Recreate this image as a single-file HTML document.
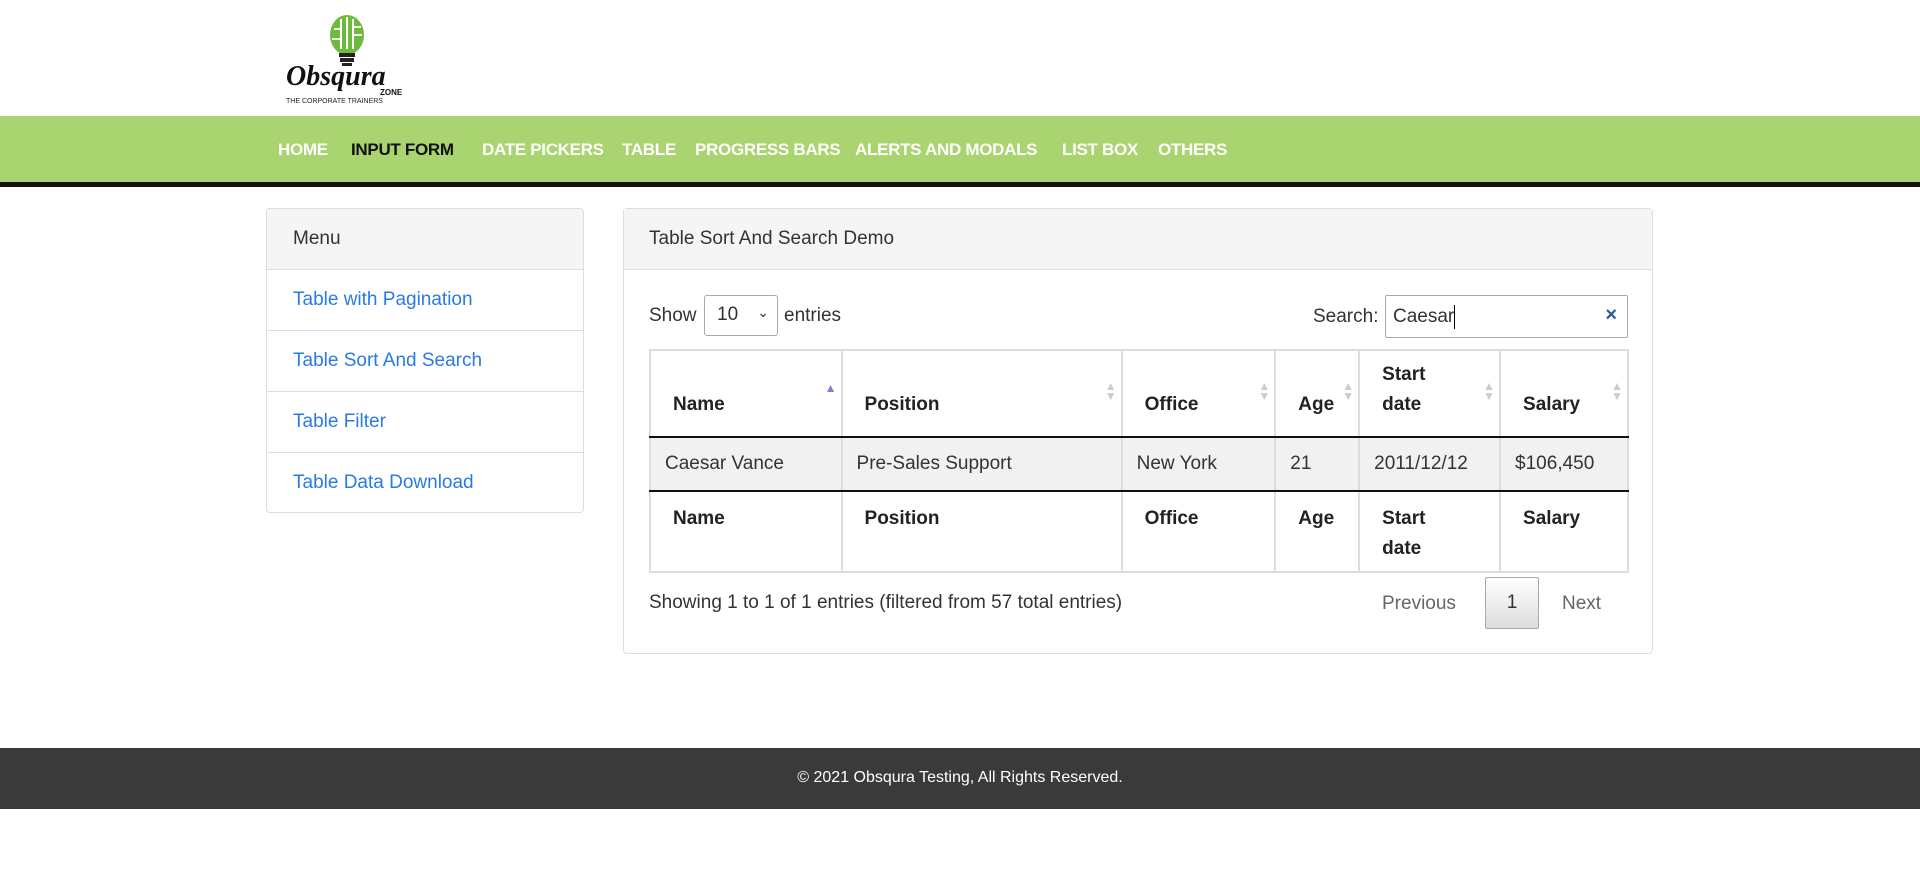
<!DOCTYPE html>
<html><head><meta charset="utf-8"><style>
*{box-sizing:border-box;margin:0;padding:0}
body{width:1920px;height:875px;background:#fff;font-family:"Liberation Sans",Arial,sans-serif;color:#333;position:relative;overflow:hidden;font-size:19px}
.abs{position:absolute}
.nav{left:0;top:116px;width:1920px;height:71px;background:#a9d46f;border-bottom:5px solid #111}
.nav span{position:absolute;top:24px;font-weight:bold;font-size:17px;color:#fff;letter-spacing:-0.3px}
.side{left:266px;top:208px;width:318px;height:305px;border:1px solid #ddd;border-radius:4px;overflow:hidden}
.side div{height:61px;border-bottom:1px solid #ddd;padding-left:26px;line-height:60px;color:#2a7ae2;font-size:19px}
.side div.h{background:#f5f5f5;color:#333}
.side div:last-child{border-bottom:none}
.main{left:623px;top:208px;width:1030px;height:446px;border:1px solid #ddd;border-radius:4px}
.main .h{height:61px;background:#f5f5f5;border-bottom:1px solid #ddd;line-height:60px;padding-left:25px;font-size:19px}
table{position:absolute;left:649px;top:349px;width:980px;border-collapse:collapse;border:2px solid #ddd}
td,th{border-left:2px solid #ddd;text-align:left;font-size:19px;vertical-align:bottom;position:relative}
th{font-weight:bold;color:#222}
thead th{height:87px;padding:0 0 16px 22px;border-bottom:2px solid #111;line-height:30px}
tbody td{height:54px;background:#f1f1f1;padding:0 14px;vertical-align:middle;border-bottom:2px solid #111}
tfoot th{height:81px;vertical-align:top;padding:12px 0 0 22px;line-height:30px}
.ar{position:absolute;right:4px;top:30px;font-size:12px;color:#ccc;line-height:10px}
</style></head><body>
<svg class="abs" style="left:284px;top:15px" width="126" height="90" viewBox="0 0 126 90">
<ellipse cx="63" cy="20" rx="17" ry="20" fill="#6cbb3c"/>
<path d="M57 4v30M63 2v32M69 4v30M50 14h8M68 20h10M48 24h9M69 12h8" stroke="#fff" stroke-width="2"/>
<rect x="55" y="38" width="16" height="4" fill="#222"/><rect x="56" y="43" width="14" height="4" fill="#222"/><rect x="58" y="48" width="10" height="3" fill="#222"/>
<text x="2" y="70" font-family="Liberation Serif,serif" font-weight="bold" font-style="italic" font-size="28" fill="#111">Obsqura</text>
<text x="96" y="80" font-size="8" font-weight="bold" fill="#111" font-family="Liberation Sans,sans-serif">ZONE</text>
<text x="2" y="88" font-size="7" fill="#222" font-family="Liberation Sans,sans-serif">THE CORPORATE TRAINERS</text>
</svg>
<div class="abs nav">
<span style="left:278px">HOME</span>
<span style="left:351px;color:#111">INPUT FORM</span>
<span style="left:482px">DATE PICKERS</span>
<span style="left:622px">TABLE</span>
<span style="left:695px">PROGRESS BARS</span>
<span style="left:855px">ALERTS AND MODALS</span>
<span style="left:1062px">LIST BOX</span>
<span style="left:1158px">OTHERS</span>
</div>
<div class="abs side"><div class="h">Menu</div><div>Table with Pagination</div><div>Table Sort And Search</div><div>Table Filter</div><div>Table Data Download</div></div>
<div class="abs main"><div class="h">Table Sort And Search Demo</div></div>
<div class="abs" style="left:649px;top:305px">Show</div>
<div class="abs" style="left:704px;top:295px;width:74px;height:41px;border:1px solid #aaa;border-radius:3px;padding:8px 0 0 12px">10<span style="position:absolute;right:8px;top:8px;font-size:14px">&#8964;</span></div>
<div class="abs" style="left:784px;top:305px">entries</div>
<div class="abs" style="left:1313px;top:306px">Search:</div>
<div class="abs" style="left:1385px;top:295px;width:243px;height:43px;border:1px solid #aaa;border-radius:2px;padding:9px 0 0 7px">Caesar<span style="display:inline-block;width:1px;height:24px;background:#000;vertical-align:middle"></span><span style="position:absolute;right:10px;top:8px;color:#2c5aa0;font-weight:bold;font-size:20px">&#215;</span></div>
<table>
<colgroup><col style="width:192px"><col style="width:281px"><col style="width:154px"><col style="width:84px"><col style="width:141px"><col style="width:128px"></colgroup>
<thead><tr><th>Name<span class="ar" style="color:#7b7fd6;top:32px">&#9650;</span></th><th>Position<span class="ar">&#9650;<br>&#9660;</span></th><th>Office<span class="ar">&#9650;<br>&#9660;</span></th><th>Age<span class="ar">&#9650;<br>&#9660;</span></th><th>Start<br>date<span class="ar">&#9650;<br>&#9660;</span></th><th>Salary<span class="ar">&#9650;<br>&#9660;</span></th></tr></thead>
<tbody><tr><td>Caesar Vance</td><td>Pre-Sales Support</td><td>New York</td><td>21</td><td>2011/12/12</td><td>$106,450</td></tr></tbody>
<tfoot><tr><th>Name</th><th>Position</th><th>Office</th><th>Age</th><th>Start<br>date</th><th>Salary</th></tr></tfoot>
</table>
<div class="abs" style="left:649px;top:592px">Showing 1 to 1 of 1 entries (filtered from 57 total entries)</div>
<div class="abs" style="left:1382px;top:593px;color:#666">Previous</div>
<div class="abs" style="left:1485px;top:577px;width:54px;height:52px;border:1px solid #aaa;border-radius:2px;background:linear-gradient(#fff,#ddd);text-align:center;line-height:50px">1</div>
<div class="abs" style="left:1562px;top:593px;color:#666">Next</div>
<div class="abs" style="left:0;top:748px;width:1920px;height:61px;background:#3a3a3a;color:#fff;text-align:center;line-height:60px;font-size:16px">© 2021 Obsqura Testing, All Rights Reserved.</div>
</body></html>
